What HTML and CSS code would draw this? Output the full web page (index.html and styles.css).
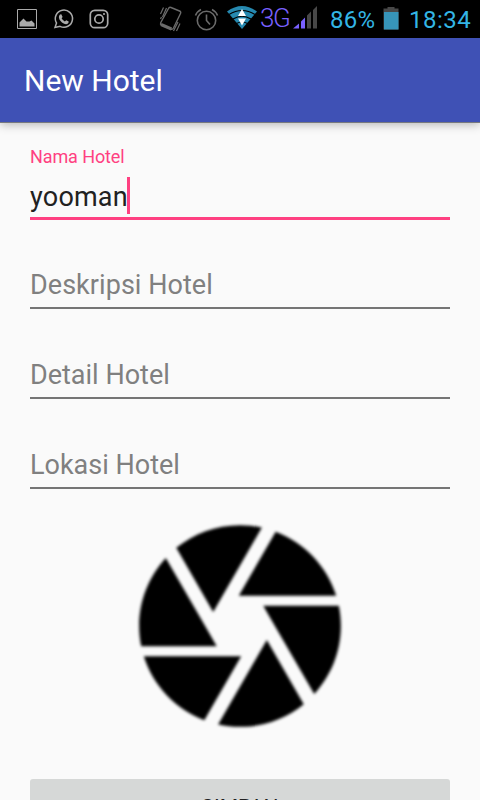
FILE: index.html
```html
<!DOCTYPE html>
<html lang="id">
<head>
<meta charset="utf-8">
<title>New Hotel</title>
<link rel="stylesheet" href="styles.css">
</head>
<body>
<header class="status">
  <svg class="notices" width="110" height="38" viewBox="0 0 110 38" fill="none" stroke="#aaa">
    <path d="M17.500 9.500h19v19h-19z"/>
    <path d="M19.500 26.500v-4l4-4 3 3h3l2-1 3 3v3z" fill="#aaa" stroke="none"/>
    <path d="M55 27.500l1.500-4.500A8.600 8.600 0 1 1 60 26.300z" stroke-width="1.500"/>
    <path d="M60 14.500l1.300-.3 1.300 2.700-1 1.400c.8 1.500 1.800 2.400 3.300 3.200l1.300-1.200 2.500 1.200c0 3-3 3.100-5 2-2.500-1.300-4.200-3.200-4.700-5.500-.3-1.400.2-2.600 1-3.500z" fill="#aaa" stroke="none"/>
    <rect x="90.300" y="10.300" width="17.400" height="17.400" rx="4.500" stroke-width="1.700"/>
    <circle cx="99" cy="19" r="4.200" stroke-width="1.700"/>
    <circle cx="104" cy="14" r="1.100" fill="#aaa" stroke="none"/>
  </svg>
  <svg class="system" width="102" height="38" viewBox="158 0 102 38" fill="none">
    <g stroke="#6b6b6b">
      <path d="M168.500 8.500q.7-1.700 2.500-1l8.500 3.500q1.800.8 1 2.500l-7 14.500q-1 1.800-2.500 1.200l-9.500-4q-1.500-.8-.8-2.500z" stroke-width="1.400"/>
      <path d="M161 24.500l10.500 4.500" stroke-width="3"/>
      <path d="M160.500 14l3-6.500M162.500 17l4-9M160.500 19l1-2M173.500 31l4.500-9M176.500 31l3.500-7.500" stroke-width="1.200"/>
      <circle cx="206.500" cy="20.500" r="9.200" stroke-width="1.600"/>
      <path d="M206.500 14.500v6l3.500 4" stroke-width="1.600"/>
      <path d="M195.500 15.500q1.500-4 5.500-6M212 9.500q4 2 5.500 6" stroke-width="1.600"/>
    </g>
    <path d="M242 29l-15-17.500q15-11 30 0z" fill="#2689b0"/>
    <path d="M229 14.500q13-8 26 0M233 19q9-5.500 18 0M236.500 23.500q5.500-3 11 0" stroke="#000" stroke-width="1.200"/>
    <path d="M242 9l4 7h-8zM242 25.500l-4-7h8z" fill="#fff"/>
  </svg>
  <span class="network">3G</span>
  <svg class="signal" width="25" height="38" viewBox="293 0 25 38">
    <path d="M293 28.500l6-5v5zM301 28.500v-7l4-4v11z" fill="#7960ff"/>
    <path d="M307 28.500v-13l4-4v17zM313 28.500V10l4-4v22.500z" fill="#484848"/>
  </svg>
  <span class="battery">86%</span>
  <svg class="cell" width="16" height="38" viewBox="383 0 16 38">
    <path d="M383.500 29.500v-21h4V7h7v1.500h4v21z" fill="#484848"/>
    <path d="M384 12h14.500v17.500H384z" fill="#3795b9"/>
  </svg>
  <span class="clock">18:34</span>
</header>
<div class="appbar"><h1>New Hotel</h1></div>
<main>
  <div class="field focused">
    <span class="label">Nama Hotel</span>
    <div class="value"><span>yooman</span><i class="caret"></i></div>
  </div>
  <div class="field"><span class="hint deskripsi">Deskripsi Hotel</span></div>
  <div class="field"><span class="hint">Detail Hotel</span></div>
  <div class="field"><span class="hint">Lokasi Hotel</span></div>
  <svg class="aperture" width="242" height="242" viewBox="0 0 24 24">
    <path d="M9.400 10.500l4.770-8.260C13.470 2.090 12.750 2 12 2c-2.400 0-4.600.85-6.320 2.250l3.660 6.350.06-.1zM21.540 9c-.92-2.920-3.150-5.260-6-6.340L11.880 9h9.660zm.26 1h-7.490l.29.500 4.760 8.250C21 16.970 22 14.610 22 12c0-.69-.07-1.350-.2-2zM8.540 12l-3.900-6.750C3.010 7.030 2 9.390 2 12c0 .69.070 1.350.2 2h7.490l-1.150-2zm-6.080 3c.92 2.920 3.150 5.260 6 6.340L12.120 15H2.460zm11.270 0l-3.900 6.760c.7.150 1.420.24 2.170.24 2.400 0 4.600-.85 6.320-2.250l-3.660-6.350-.93 1.600z"/>
  </svg>
  <button class="save">SIMPAN</button>
</main>
</body>
</html>
```
FILE: styles.css
```css
* { box-sizing: border-box; }
body {
  margin: 0;
  height: 800px;
  overflow: hidden;
  background: #fafafa;
  font-family: Roboto, "Liberation Sans", sans-serif;
}
svg { display: block; flex: none; }
.status {
  display: flex;
  height: 38px;
  background: #000;
  color: #33b5e5;
  font-size: 24px;
  line-height: 40px;
  white-space: nowrap;
}
.system { margin-left: 48px; }
.network {
  width: 33px;
  color: #7960ff;
  font-size: 26px;
  font-weight: 300;
  letter-spacing: -1.5px;
  line-height: 37px;
}
.battery { width: 53px; margin-left: 12px; letter-spacing: .3px; }
.clock { margin-left: 10px; letter-spacing: .5px; }
.appbar {
  height: 84px;
  padding: 0 24px;
  background: #3f51b5;
  border-bottom: 1px solid #3f51b5;
  box-shadow: 0 1px 0 #77797f, 0 3px 9px rgba(0, 0, 0, .26);
}
h1 {
  margin: 0;
  color: #fff;
  font-size: 30px;
  font-weight: 400;
  line-height: 85px;
}
main { padding: 22px 30px 0; }
.field {
  display: flex;
  flex-direction: column;
  justify-content: flex-end;
  height: 90px;
  border-bottom: 2px solid #757575;
}
.focused { height: 76px; margin-bottom: -1px; border-bottom: 3px solid #ff4081; }
.label { height: 33px; color: #ff4081; font-size: 18px; line-height: 26px; letter-spacing: -.1px; }
.value {
  display: flex;
  height: 40px;
  color: #212121;
  font-size: 27px;
  line-height: 40px;
  letter-spacing: .2px;
}
.caret { width: 3px; height: 37px; margin-left: -1px; background: #ff4081; }
.hint { height: 44px; color: #808080; font-size: 27px; line-height: 44px; }
.deskripsi { letter-spacing: .05px; }
.aperture { margin: 16px auto 0; filter: blur(1.5px); }
.save {
  display: block;
  width: 100%;
  height: 60px;
  margin-top: 32px;
  padding: 0 0 4px;
  border: 0;
  border-radius: 3px;
  background: #d6d8d7;
  color: #212121;
  font: 400 21px/54px Roboto, sans-serif;
}
```
